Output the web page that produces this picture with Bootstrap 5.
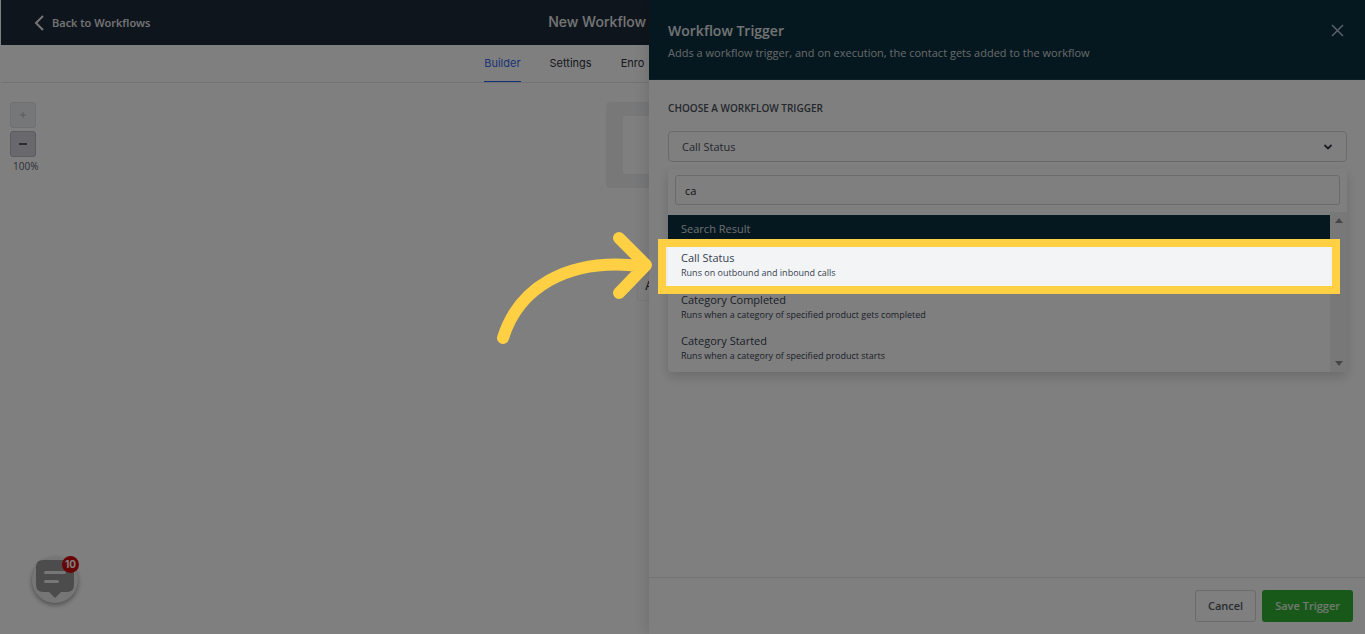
<!DOCTYPE html>
<html lang="en">
<head>
<meta charset="utf-8">
<meta name="viewport" content="width=device-width, initial-scale=1">
<title>New Workflow</title>
<link href="https://cdn.jsdelivr.net/npm/bootstrap@5.3.0/dist/css/bootstrap.min.css" rel="stylesheet">
<script src="https://cdn.jsdelivr.net/npm/bootstrap@5.3.0/dist/js/bootstrap.bundle.min.js" defer></script>
<style>
  body { font-family: "Open Sans", "Noto Sans", sans-serif; font-size: 11px; line-height: 14px; color: #374151; overflow: hidden; }
  .workspace { font-family: Inter, sans-serif; width: 47.55%; position: relative; border-left: 1px solid #fff; }
  .topbar { background: #1f2b39; height: 45px; color: #fff; padding-left: 33px; }
  .back-link { font: 600 11px/14px "Open Sans", sans-serif; color: #e8eaed; }
  .flow-title { font-size: 14px; line-height: 18px; font-weight: 500; color: #e8eaed; margin: 0 3px 2px 0; }
  .tabbar { height: 38px; padding-left: 35.4vw; border-bottom: 1px solid #e4e6ea; gap: 29px; font-size: 11px; }
  .tabbar a { color: #30343c; height: 37px; line-height: 36px; border-bottom: 1px solid transparent; }
  .tabbar a.active { color: #3367e8; border-color: #2b62e6; }
  .zoom-tools { padding: 19px 9px; gap: 3px; }
  .zoom-tools button { width: 26px; height: 26px; border: 1px solid #b5b8c3; border-radius: 3px; background: #d0d1da; display: grid; place-items: center; padding: 0; }
  .zoom-tools button:disabled { background: #eceef1; border-color: #dfe1e4; }
  .zoom-tools output { font: 10px/13px "Open Sans", sans-serif; color: #5d6068; padding: 0 3px; }
  .trigger-node { position: absolute; left: 605px; top: 102px; width: 153px; height: 86px; background: #f0f1f3; border-radius: 4px; padding: 14px 17px; }
  .trigger-node div { background: #fff; height: 58px; border-radius: 3px; }
  .action-node { position: absolute; left: 636px; top: 272px; width: 90px; height: 29px; border: 1px dotted #e5e5e5; border-radius: 3px; padding: 6px 7px; font-size: 12px; color: #222; }
  .chat-button { position: absolute; left: 31px; bottom: 31px; width: 46px; height: 46px; border: 0; border-radius: 50%; padding: 0; background: #ececec; box-shadow: 0 2px 5px rgba(0,0,0,.4); }
  .chat-count { position: absolute; right: -1px; top: -1px; width: 17px; height: 17px; border-radius: 50%; background: #d0080c; color: #fff; font-size: 10px; line-height: 17px; font-weight: 700; }
  .trigger-panel { position: relative; z-index: 2; background: #fff; box-shadow: -2px 0 14px rgba(0,0,0,.14); }
  .panel-head { background: #0c303e; color: #e4e8ea; height: 80px; padding: 22px 20px 22px 19px; border-bottom: 1px solid #1b3c49; }
  .panel-head h1 { font-size: 14px; line-height: 17px; font-weight: 600; margin: 0 0 7px; }
  .panel-head p { margin: 0; color: #ccd3d7; }
  .panel-head button { align-self: flex-start; width: 15px; height: 15px; border: 0; padding: 0; background: none; margin-top: 1px; }
  .panel-body { padding: 21px 18px 0 19px; }
  .field-label { font-size: 10px; line-height: 14px; font-weight: 600; color: #4a4f5a; margin-bottom: 16px; }
  .form-select { font-size: 11px; line-height: 14px; color: #4a4f5a; height: 31px; border: 1px solid #d3d5d9; border-radius: 4px; padding: 7px 13px;
    background-image: url("data:image/svg+xml,%3Csvg xmlns='http://www.w3.org/2000/svg' viewBox='0 0 10 10'%3E%3Cpath d='M1.5 3 5 6.5 8.5 3' fill='none' stroke='%23353b46' stroke-width='1.8'/%3E%3C/svg%3E"); background-size: 10px 10px; background-position: right 13px center; }
  .result-menu { margin-top: 7px; border-radius: 4px; box-shadow: 0 5px 12px rgba(0,0,0,.16); background: #fff; }
  .search-box { padding: 6px 7px; height: 43px; }
  .search-box .form-control { font-size: 11px; line-height: 14px; height: 30px; border: 1px solid #d3d5d9; border-radius: 3px; padding: 6px 9px; color: #222; }
  .result-list { padding: 3px 0; height: 160px; }
  .result-heading { background: #0c303e; color: #d7dde0; height: 29px; padding: 7px 13px; }
  .result-option { position: relative; padding: 6px 13px; height: 42px; }
  .result-option:last-child { height: 41px; padding-top: 5px; }
  .result-option strong { display: block; font-weight: 400; line-height: 15px; }
  .result-option span { display: block; font-size: 9px; line-height: 16px; }
  .result-option.current { background: #f2f4f6; }
  .scroll-rail { width: 17px; background: #f1f1f1; padding: 6px 4px; }
  .spotlight { position: absolute; z-index: 10; inset: -5px -10px -8px -10px; border: 8px solid #ffd043; box-shadow: 0 0 0 3000px rgba(0,0,0,.5); pointer-events: none; }
  .spotlight svg { position: absolute; right: 100%; top: 50%; margin: -36px 14px 0 0; }
  .panel-foot { border-top: 1px solid #e2e4e7; padding: 12px; gap: 6px; }
  .panel-foot .btn { font-size: 11px; line-height: 14px; padding: 8px 12px; border-radius: 3px; height: 32px; }
  .btn-plain { border: 1px solid #d5d7da; color: #535861; font-weight: 600; }
  .btn-save { background: #30b334; color: #e2f1e3; font-weight: 600; }
</style>
</head>
<body>
<div class="d-flex vh-100 overflow-hidden">
  <main class="workspace d-flex flex-column flex-shrink-0 overflow-hidden">
    <header class="topbar d-flex align-items-center justify-content-between flex-shrink-0">
      <a class="back-link d-flex align-items-center text-decoration-none gap-2" href="#">
        <svg width="10" height="16" viewBox="0 0 10 16" fill="none" stroke="#e8eaed" stroke-width="2"><path d="M9 1 2 8l7 7"/></svg>
        Back to Workflows
      </a>
      <span class="flow-title">New Workflow</span>
    </header>
    <nav class="tabbar d-flex flex-shrink-0 text-nowrap">
      <a class="active text-decoration-none" href="#">Builder</a>
      <a class="text-decoration-none" href="#">Settings</a>
      <a class="text-decoration-none" href="#">Enro</a>
    </nav>
    <div class="zoom-tools d-flex flex-column align-items-start">
      <button type="button" aria-label="Zoom in" disabled><svg width="6" height="6" viewBox="0 0 6 6" stroke="#b3b6ba"><path d="M3 0v6M0 3h6"/></svg></button>
      <button type="button" aria-label="Zoom out"><svg width="8" height="2" viewBox="0 0 8 2"><path fill="#555b66" d="M0 0h8v2H0z"/></svg></button>
      <output>100%</output>
    </div>
    <div class="trigger-node"><div></div></div>
    <div class="action-node">A</div>
    <button class="chat-button" type="button" aria-label="Messages">
      <svg width="46" height="46" viewBox="0 0 46 46"><path fill="#999" d="M11 3h24q7 0 7 7v18q0 7-7 7h-6l-6 6-6-6h-6q-7 0-7-7V10q0-7 7-7z"/><path d="M13.500 15.500h19M13.500 24.500h12" stroke="#ececec" stroke-width="3" stroke-linecap="round"/></svg>
      <span class="chat-count">10</span>
    </button>
  </main>

  <aside class="trigger-panel d-flex flex-column flex-grow-1">
    <header class="panel-head d-flex justify-content-between flex-shrink-0">
      <div>
        <h1>Workflow Trigger</h1>
        <p>Adds a workflow trigger, and on execution, the contact gets added to the workflow</p>
      </div>
      <button type="button" aria-label="Close"><svg class="d-block" width="15" height="15" viewBox="0 0 15 15" stroke="#b4c0d3" stroke-width="1.500"><path d="m2 2 11 11M13 2 2 13"/></svg></button>
    </header>
    <div class="panel-body flex-grow-1">
      <label class="field-label d-block" for="trigger">CHOOSE A WORKFLOW TRIGGER</label>
      <select class="form-select" id="trigger"><option>Call Status</option></select>
      <div class="result-menu">
        <div class="search-box"><input class="form-control" type="text" value="ca" aria-label="Search triggers"></div>
        <div class="d-flex">
          <div class="result-list flex-grow-1">
            <div class="result-heading">Search Result</div>
            <div class="result-option current">
              <strong>Call Status</strong><span>Runs on outbound and inbound calls</span>
              <div class="spotlight">
                <svg width="156" height="114" viewBox="0 0 156 114" fill="none" stroke="#ffd043" stroke-width="12" stroke-linecap="round" stroke-linejoin="round"><path d="M7 107C22 58 70 26 145 35M123 7l27 27-27 28"/></svg>
              </div>
            </div>
            <div class="result-option"><strong>Category Completed</strong><span>Runs when a category of specified product gets completed</span></div>
            <div class="result-option"><strong>Category Started</strong><span>Runs when a category of specified product starts</span></div>
          </div>
          <div class="scroll-rail d-flex flex-column justify-content-between align-items-center">
            <svg width="8" height="5" viewBox="0 0 8 5"><path fill="#8d8d8d" d="M0 5 4 0l4 5z"/></svg>
            <svg width="8" height="5" viewBox="0 0 8 5"><path fill="#8d8d8d" d="m0 0 4 5 4-5z"/></svg>
          </div>
        </div>
      </div>
    </div>
    <footer class="panel-foot d-flex justify-content-end">
      <button class="btn btn-plain" type="button">Cancel</button>
      <button class="btn btn-save" type="button">Save Trigger</button>
    </footer>
  </aside>
</div>
</body>
</html>
